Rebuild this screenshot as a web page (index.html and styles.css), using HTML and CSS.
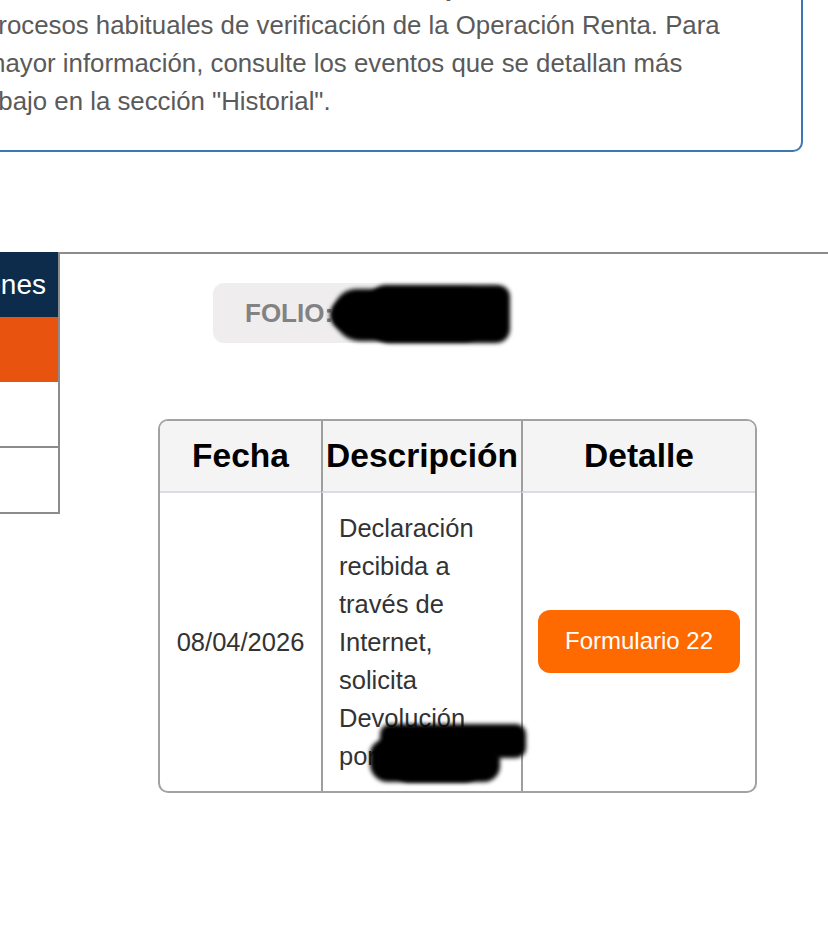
FILE: index.html
```html
<!DOCTYPE html>
<html lang="es">
<head>
<meta charset="utf-8">
<title>Estado de declaración</title>
<link rel="stylesheet" href="styles.css">
</head>
<body>
<div class="page">
  <div class="notice">
    <p class="notice-text">Su declaración de renta se encuentra sujeta a los<br>procesos habituales de verificación de la Operación Renta. Para mayor información, consulte los eventos que se detallan más abajo en la sección "Historial".</p>
  </div>

  <div class="layout">
    <nav class="sidebar">
      <div class="side-item side-active">Opciones</div>
      <div class="side-item side-orange"></div>
      <div class="side-item side-plain"></div>
      <div class="side-item side-plain"></div>
    </nav>

    <main class="main">
      <div class="folio">
        <span class="folio-label">FOLIO:</span>
        <span class="folio-value">000000000</span>
        <span class="redact redact-folio">
          <span class="blob b1"></span>
          <span class="blob b2"></span>
          <span class="blob b3"></span>
        </span>
      </div>

      <table class="history">
        <colgroup>
          <col class="c-date">
          <col class="c-desc">
          <col class="c-detail">
        </colgroup>
        <thead>
          <tr>
            <th>Fecha</th>
            <th>Descripción</th>
            <th>Detalle</th>
          </tr>
        </thead>
        <tbody>
          <tr>
            <td class="date">08/04/2026</td>
            <td class="desc">Declaración recibida a través de Internet, solicita Devolución por
              <span class="redact redact-desc">
                <span class="blob d1"></span>
                <span class="blob d2"></span>
                <span class="blob d3"></span>
              </span>
            </td>
            <td class="detail"><a class="btn" href="#">Formulario 22</a></td>
          </tr>
        </tbody>
      </table>
    </main>
  </div>
</div>
</body>
</html>
```
FILE: styles.css
```css
html, body {
  margin: 0;
  padding: 0;
  background: #ffffff;
  overflow: hidden;
}

body {
  width: 828px;
  height: 938px;
  font-family: "Liberation Sans", Arial, Helvetica, sans-serif;
}

.page {
  margin: -52px 0 0 -40px;
}

/* ---------- notice box ---------- */
.notice {
  margin-right: 25px;
  border: 2px solid #3d78b3;
  border-radius: 10px;
  padding: 18px 70px 30px 22px;
}

.notice-text {
  margin: 0;
  font-size: 25.8px;
  line-height: 38px;
  color: #5a5a5a;
}

/* ---------- layout ---------- */
.layout {
  display: flex;
  margin-top: 100px;
}

.sidebar {
  width: 98px;
  flex: none;
  border-right: 2px solid #8c8c8c;
  align-self: flex-start;
}

.side-item {
  height: 65px;
  display: flex;
  align-items: center;
  justify-content: flex-end;
  padding-right: 12px;
  font-size: 28px;
  color: #ffffff;
  box-sizing: border-box;
}

.side-active {
  background: #0d2b4b;
  overflow: hidden;
  white-space: nowrap;
}

.side-orange {
  background: #e8540f;
}

.side-plain {
  height: 66px;
  border-bottom: 2px solid #8c8c8c;
  background: #ffffff;
}

.main {
  flex: 1;
  border-top: 2px solid #8c8c8c;
  padding-top: 29px;
}

/* ---------- folio ---------- */
.folio {
  position: relative;
  width: 290px;
  height: 60px;
  margin-left: 153px;
  box-sizing: border-box;
  padding-left: 32px;
  display: flex;
  align-items: center;
  background: #efeded;
  border-radius: 11px;
  font-size: 26px;
  font-weight: bold;
  color: #828282;
}

.folio-value {
  margin-left: 4px;
}

.redact {
  position: absolute;
  display: block;
}

.blob {
  position: absolute;
  display: block;
  background: #000;
  filter: blur(2px);
}

.redact-folio {
  left: 117px;
  top: 0;
  width: 182px;
  height: 64px;
}

.b1 { left: 4px; top: 6px; width: 150px; height: 52px; border-radius: 22px 18px 20px 26px; }
.b2 { left: 40px; top: 2px; width: 140px; height: 58px; border-radius: 16px 12px 14px 20px; }
.b3 { left: 0; top: 18px; width: 60px; height: 28px; border-radius: 14px; }

/* ---------- table ---------- */
.history {
  margin: 76px 0 0 98px;
  width: 599px;
  table-layout: fixed;
  border-collapse: separate;
  border-spacing: 0;
  border: 2px solid #a2a2a2;
  border-radius: 10px;
  overflow: hidden;
}

.c-date { width: 161px; }
.c-desc { width: 200px; }
.c-detail { width: 234px; }

.history th {
  height: 70px;
  padding: 0;
  background: #f4f4f4;
  border-bottom: 2px solid #dcdde2;
  font-size: 33.5px;
  font-weight: bold;
  color: #000;
  text-align: center;
  white-space: nowrap;
}

.history th + th,
.history td + td {
  border-left: 2px solid #9e9e9e;
}

.history td {
  padding: 16px;
  font-size: 25.5px;
  line-height: 38px;
  color: #333;
  vertical-align: middle;
}

.history td.date {
  padding: 0;
  text-align: center;
}

.history td.desc {
  position: relative;
  text-align: left;
}

.history td.detail {
  padding: 0;
  text-align: center;
}

.redact-desc {
  left: 47px;
  top: 229px;
  width: 160px;
  height: 64px;
}

.d1 { left: 10px; top: 2px; width: 146px; height: 34px; border-radius: 10px; }
.d2 { left: 0; top: 18px; width: 130px; height: 42px; border-radius: 14px 20px 16px 18px; }
.d3 { left: 22px; top: 10px; width: 90px; height: 50px; border-radius: 18px; }

.btn {
  display: inline-flex;
  align-items: center;
  justify-content: center;
  width: 202px;
  height: 63px;
  margin-top: -2px;
  background: #ff6a00;
  border-radius: 12px;
  color: #ffffff;
  font-size: 24px;
  text-decoration: none;
}
```
